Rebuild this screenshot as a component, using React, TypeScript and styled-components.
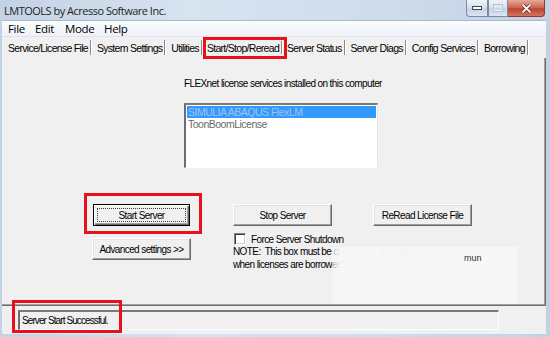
import styled, { createGlobalStyle } from 'styled-components';

const GlobalStyle = createGlobalStyle`
  html, body {
    margin: 0;
    padding: 0;
    background: #ffffff;
  }
  body {
    font-family: 'Liberation Sans', Arial, sans-serif;
  }
`;

const TABS = [
  'Service/License File',
  'System Settings',
  'Utilities',
  'Start/Stop/Reread',
  'Server Status',
  'Server Diags',
  'Config Services',
  'Borrowing',
];

const ACTIVE_TAB = 'Start/Stop/Reread';

const SERVICES = ['SIMULIA ABAQUS FlexLM', 'ToonBoomLicense'];

const Window = styled.div`
  position: relative;
  width: 550px;
  height: 337px;
  box-sizing: border-box;
  padding: 0 4px 3px 2px;
  display: flex;
  flex-direction: column;
  background: linear-gradient(90deg, #c3d2e4 0%, #d8e3f0 35%, #cfdcec 70%, #c2d1e3 100%);
  overflow: hidden;
`;

const TitleBar = styled.div`
  height: 20px;
  display: flex;
  justify-content: space-between;
  align-items: flex-start;
`;

const Title = styled.span`
  font-family: 'Open Sans', 'Noto Sans', sans-serif;
  font-size: 11px;
  letter-spacing: -0.5px;
  color: #1e1e1e;
  padding: 3px 0 0 2px;
`;

const Controls = styled.div`
  display: flex;
  margin-right: 1px;
`;

const CtrlButton = styled.div<{ $close?: boolean; $w: number }>`
  width: ${(p) => p.$w}px;
  height: 17px;
  box-sizing: border-box;
  display: flex;
  align-items: center;
  justify-content: center;
  border: 1px solid ${(p) => (p.$close ? '#8c3a32' : '#7d8ba0')};
  border-top: none;
  border-left-width: ${(p) => (p.$close ? 0 : 1)}px;
  border-radius: ${(p) => (p.$close ? '0 0 4px 0' : '0')};
  background: ${(p) =>
    p.$close
      ? 'linear-gradient(180deg, #e6a898 0%, #cf6a56 45%, #bd4430 55%, #d27460 100%)'
      : 'linear-gradient(180deg, #eef3f9 0%, #d8e2ee 45%, #c5d3e3 55%, #dbe6f1 100%)'};
  &:first-child {
    border-radius: 0 0 0 4px;
  }
`;

const Client = styled.div`
  flex: 1;
  display: flex;
  flex-direction: column;
  background: #f0f0f0;
  border-top: 1px solid #a9b8cb;
  font-size: 10px;
  letter-spacing: -0.6px;
  color: #000;
`;

const MenuBar = styled.div`
  height: 15px;
  display: flex;
  align-items: center;
  padding-left: 6px;
  background: linear-gradient(180deg, #fafcfe 0%, #eef2f7 100%);
  border-bottom: 1px solid #dfe5ec;
`;

const MenuItem = styled.span<{ $w: number }>`
  width: ${(p) => p.$w}px;
  font-family: 'Open Sans', 'Noto Sans', sans-serif;
  font-size: 11.5px;
  letter-spacing: -0.35px;
  color: #000;
`;

const TabStrip = styled.div`
  height: 21px;
  display: flex;
  align-items: center;
  padding-left: 6px;
  font-size: 10.5px;
  letter-spacing: -0.7px;
`;

const Tab = styled.div<{ $active?: boolean }>`
  display: flex;
  align-items: center;
  box-sizing: border-box;
  height: ${(p) => (p.$active ? '22px' : '16px')};
  padding-left: ${(p) => (p.$active ? '1px' : '0')};
  border: ${(p) => (p.$active ? '3px solid #e8101a' : 'none')};
  margin-left: ${(p) => (p.$active ? '-5px' : '0')};
  white-space: nowrap;
`;

const Separator = styled.span<{ $inside?: boolean }>`
  width: 1px;
  height: ${(p) => (p.$inside ? '13px' : '15px')};
  background: #8a8a8a;
  border-right: 1px solid #ffffff;
  margin: 0 ${(p) => (p.$inside ? '1px' : '5px')} 0 2px;
`;

const Panel = styled.div`
  flex: 1;
  display: flex;
  flex-direction: column;
  border-right: 1px solid #6f6f6f;
  border-bottom: 1px solid #6f6f6f;
  box-shadow: inset -1px -1px 0 #a0a0a0;
  padding: 19px 0 0 182px;
  position: relative;
`;

const Label = styled.div`
  height: 14px;
  line-height: 14px;
`;

const ListBox = styled.div`
  margin-top: 12px;
  width: 194px;
  height: 65px;
  box-sizing: border-box;
  background: #ffffff;
  border-style: solid;
  border-width: 2px 1px 1px 2px;
  border-color: #7a7a7a #e3e3e3 #ffffff #6d6d6d;
  padding: 1px;
`;

const ListItem = styled.div<{ $selected?: boolean }>`
  height: 12px;
  line-height: 12px;
  padding-left: 1px;
  font-size: 10.5px;
  letter-spacing: -0.5px;
  background: ${(p) => (p.$selected ? '#3399ff' : 'transparent')};
  color: ${(p) => (p.$selected ? '#9ec3ec' : '#6a6a6a')};
`;

const ControlsRow = styled.div`
  margin: 25px 0 0 -100px;
  display: flex;
  gap: 31px;
`;

const LeftColumn = styled.div`
  display: flex;
  flex-direction: column;
  align-items: flex-start;
  gap: 4px;
`;

const Highlight = styled.div`
  border: 3px solid #e8101a;
  padding: 8px 9px 5px 6px;
`;

const RightColumn = styled.div`
  display: flex;
  flex-direction: column;
  padding-top: 11px;
`;

const ButtonRow = styled.div`
  display: flex;
  gap: 41px;
`;

const Button = styled.div<{ $default?: boolean; $indent?: number }>`
  position: relative;
  width: ${(p) => (p.$default ? '97px' : '99px')};
  height: 22px;
  margin-left: ${(p) => p.$indent ?? 0}px;
  box-sizing: border-box;
  display: flex;
  align-items: center;
  justify-content: center;
  background: #f0f0f0;
  border: 1px solid;
  border-color: ${(p) => (p.$default ? '#000' : '#ffffff #696969 #696969 #ffffff')};
  box-shadow: ${(p) =>
    p.$default
      ? 'inset 1px 1px 0 #ffffff, inset -1px -1px 0 #696969, inset -2px -2px 0 #a0a0a0'
      : 'inset -1px -1px 0 #a0a0a0, inset 1px 1px 0 #e3e3e3'};
  white-space: nowrap;
`;

const FocusRing = styled.span`
  position: absolute;
  inset: 3px;
  border: 1px dotted #404040;
`;

const CheckRow = styled.div`
  display: flex;
  align-items: center;
  gap: 5px;
  margin-top: 7px;
  height: 12px;
  padding-left: 1px;
`;

const CheckBox = styled.span`
  width: 12px;
  height: 12px;
  box-sizing: border-box;
  background: #ffffff;
  border-style: solid;
  border-width: 1px;
  border-color: #808080 #ffffff #ffffff #808080;
  box-shadow: inset 1px 1px 0 #404040, inset -1px -1px 0 #d4d0c8;
`;

const Note = styled.div`
  line-height: 13px;
  white-space: nowrap;
`;

const Watermark = styled.div`
  position: absolute;
  left: 330px;
  top: 189px;
  width: 186px;
  height: 57px;
  background: linear-gradient(90deg, rgba(247, 247, 247, 0.6) 0px, rgba(247, 247, 247, 0.98) 8px);
`;

const WatermarkText = styled.span`
  position: absolute;
  left: 132px;
  top: 6px;
  font-size: 9px;
  letter-spacing: 0;
  color: #333;
`;

const StatusArea = styled.div`
  height: 28px;
  display: flex;
  align-items: center;
  padding-left: 16px;
`;

const StatusField = styled.div`
  width: 481px;
  height: 20px;
  box-sizing: border-box;
  display: flex;
  align-items: center;
  padding-left: 2px;
  letter-spacing: -0.9px;
  border-style: solid;
  border-width: 2px 1px 1px 2px;
  border-color: #7a7a7a #ffffff #ffffff #6d6d6d;
`;

const Callout = styled.div`
  position: absolute;
  left: 12px;
  top: 300px;
  width: 110px;
  height: 33px;
  box-sizing: border-box;
  border: 3px solid #e8101a;
`;

export default function App() {
  return (
    <>
      <GlobalStyle />
      <Window>
        <TitleBar>
          <Title>LMTOOLS by Acresso Software Inc.</Title>
          <Controls>
            <CtrlButton $w={22}>
              <svg width="10" height="4" viewBox="0 0 10 4">
                <rect x="0.5" y="0.5" width="9" height="3" fill="#fff" stroke="#3b4a5e" />
              </svg>
            </CtrlButton>
            <CtrlButton $w={20}>
              <svg width="10" height="8" viewBox="0 0 10 8">
                <rect x="0.5" y="0.5" width="9" height="7" fill="none" stroke="#b8c4d3" />
                <rect x="1.5" y="2.5" width="7" height="4" fill="none" stroke="#e8eef5" />
              </svg>
            </CtrlButton>
            <CtrlButton $w={37} $close>
              <svg width="11" height="9" viewBox="0 0 11 9">
                <path d="M1.5 0.5 L9.5 8.5 M9.5 0.5 L1.5 8.5" stroke="#4a1410" strokeWidth="3" />
                <path d="M1.5 0.5 L9.5 8.5 M9.5 0.5 L1.5 8.5" stroke="#ffffff" strokeWidth="1.8" />
              </svg>
            </CtrlButton>
          </Controls>
        </TitleBar>

        <Client>
          <MenuBar>
            <MenuItem $w={27}>File</MenuItem>
            <MenuItem $w={30}>Edit</MenuItem>
            <MenuItem $w={39}>Mode</MenuItem>
            <MenuItem $w={30}>Help</MenuItem>
          </MenuBar>

          <TabStrip>
            {TABS.map((t) => (
              <Tab key={t} $active={t === ACTIVE_TAB}>
                {t}
                <Separator $inside={t === ACTIVE_TAB} />
              </Tab>
            ))}
          </TabStrip>

          <Panel>
            <Label>FLEXnet license services installed on this computer</Label>
            <ListBox>
              {SERVICES.map((s, i) => (
                <ListItem key={s} $selected={i === 0}>
                  {s}
                </ListItem>
              ))}
            </ListBox>

            <ControlsRow>
              <LeftColumn>
                <Highlight>
                  <Button $default>
                    <FocusRing />
                    Start Server
                  </Button>
                </Highlight>
                <Button $indent={8}>Advanced settings &gt;&gt;</Button>
              </LeftColumn>

              <RightColumn>
                <ButtonRow>
                  <Button>Stop Server</Button>
                  <Button>ReRead License File</Button>
                </ButtonRow>
                <CheckRow>
                  <CheckBox />
                  Force Server Shutdown
                </CheckRow>
                <Note>
                  NOTE:&nbsp; This box must be checked to shut down a license server
                  <br />
                  when licenses are borrowed.
                </Note>
              </RightColumn>
            </ControlsRow>

            <Watermark>
              <WatermarkText>mun</WatermarkText>
            </Watermark>
          </Panel>

          <StatusArea>
            <StatusField>Server Start Successful.</StatusField>
          </StatusArea>
        </Client>

        <Callout />
      </Window>
    </>
  );
}
